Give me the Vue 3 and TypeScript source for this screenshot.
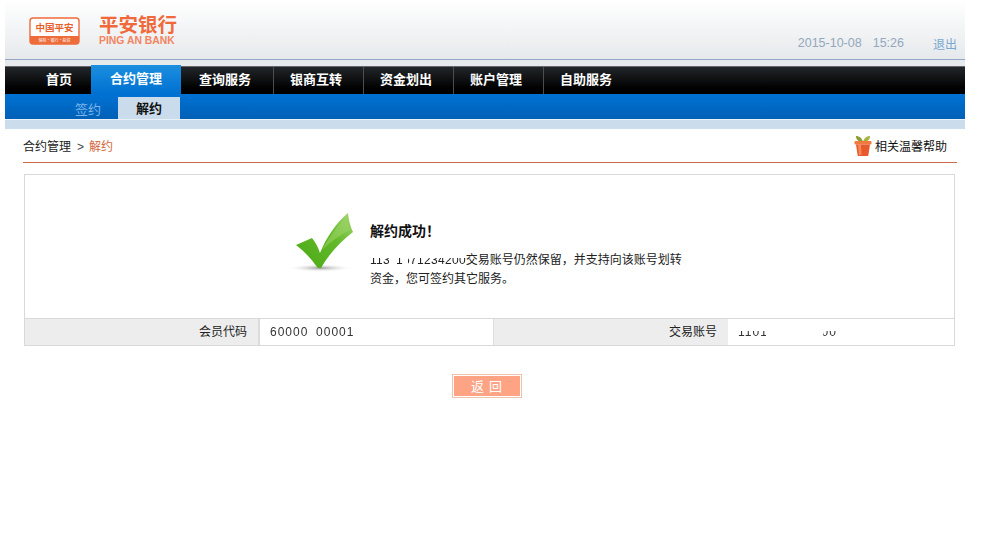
<script setup lang="ts">
interface NavItem { label: string; active?: boolean; first?: boolean }
const navItems: NavItem[] = [
  { label: '首页', first: true },
  { label: '合约管理', active: true },
  { label: '查询服务' },
  { label: '银商互转' },
  { label: '资金划出' },
  { label: '账户管理' },
  { label: '自助服务' },
]
</script>

<template>
  <div class="page">
    <header class="top">
      <div class="logo">
        <svg width="52" height="28" viewBox="0 0 52 28" class="logo-mark">
          <rect x="1" y="1" width="49" height="26" rx="3" fill="#fff" stroke="#ee6b3a" stroke-width="1.4" />
          <path d="M1 19h49v5a3 3 0 0 1-3 3H4a3 3 0 0 1-3-3z" fill="#ee6b3a" />
          <text x="25.5" y="14" text-anchor="middle" class="mark-t">中国平安</text>
          <text x="25.5" y="25" text-anchor="middle" class="mark-s">保险·银行·投资</text>
        </svg>
        <div class="brand">
          <div class="brand-cn">平安银行</div>
          <div class="brand-en">PING AN BANK</div>
        </div>
      </div>
      <div class="meta">
        <span class="date">2015-10-08</span>
        <span class="time">15:26</span>
        <span class="logout">退出</span>
      </div>
    </header>
    <div class="gap"></div>
    <nav class="nav">
      <div
        v-for="item in navItems"
        :key="item.label"
        class="nav-item"
        :class="{ active: item.active, first: item.first }"
      >{{ item.label }}</div>
    </nav>
    <div class="sub">
      <span class="sub-link">签约</span>
      <span class="sub-tab">解约</span>
    </div>
    <div class="band"></div>

    <main class="content">
      <div class="crumb">
        <div class="crumb-left">合约管理<span class="arrow">&gt;</span><span class="crumb-cur">解约</span></div>
        <div class="help">
          <svg width="18" height="21" viewBox="0 0 18 21">
            <path d="M9 7C8 3 5 1 2 1c0 4 3 6 7 6z" fill="#8a9c2e" />
            <path d="M9 7c1-4 4-6 7-6 0 4-3 6-7 6z" fill="#a3b53a" />
            <rect x="0.5" y="6" width="17" height="3.5" rx="1" fill="#f2793f" />
            <path d="M2 9.5h14l-1.6 10.5a1 1 0 0 1-1 1H4.6a1 1 0 0 1-1-1z" fill="#e8592b" />
            <path d="M4 10h3l.5 10H5z" fill="#f58a58" />
          </svg>
          <span>相关温馨帮助</span>
        </div>
      </div>

      <section class="card">
        <div class="msg">
          <svg class="check" width="66" height="62" viewBox="0 0 66 62">
            <defs>
              <linearGradient id="chk" x1="0" y1="1" x2="1" y2="0">
                <stop offset="0" stop-color="#4aa814" />
                <stop offset="0.6" stop-color="#63b92a" />
                <stop offset="1" stop-color="#a7d873" />
              </linearGradient>
              <radialGradient id="shd">
                <stop offset="0" stop-color="#9a9a9a" />
                <stop offset="1" stop-color="#fff" stop-opacity="0" />
              </radialGradient>
            </defs>
            <ellipse cx="30" cy="56" rx="33" ry="4" fill="url(#shd)" />
            <path d="M6 33L22 26Q27 32 30 41C36 26 46 11 58 1Q59 12 63 20C50 30 39 42 31 56Q29 57 27 55Q18 42 6 33z" fill="url(#chk)" />
            <path d="M32 38C40 24 48 13 57 4Q58 12 60 18C50 23 40 30 32 38z" fill="#9ed468" opacity=".55" />
          </svg>
          <div class="msg-text">
            <h1>解约成功！</h1>
            <p><span class="mask-a">11311571234200</span>交易账号仍然保留，并支持向该账号划转<br />资金，您可签约其它服务。</p>
          </div>
        </div>
        <div class="rows">
          <div class="label">会员代码</div>
          <div class="value v1"><span class="mask-b">60000100001</span></div>
          <div class="label">交易账号</div>
          <div class="value"><span class="mask-c">1101700000000</span></div>
        </div>
      </section>

      <div class="actions">
        <button class="back" type="button">返 回</button>
      </div>
    </main>
  </div>
</template>

<style>
html, body { background: #fff; overflow: hidden; }
</style>

<style scoped>
.page {
  width: 960px;
  margin-left: 5px;
  font-family: "Noto Sans CJK SC", "Liberation Sans", sans-serif;
  font-size: 12px;
  color: #222;
}
.top {
  box-sizing: border-box;
  border-bottom: 1px solid #94a6c2;
  height: 60px;
  background: linear-gradient(#fff, #e6e9ec);
  display: flex;
  justify-content: space-between;
}
.logo { display: flex; align-items: flex-start; padding: 17px 0 0 24px; }
.logo-mark { display: block; }
.mark-t { font: 700 9.5px "Noto Sans CJK SC", sans-serif; fill: #e8602c; }
.mark-s { font: 400 4px "Noto Sans CJK SC", sans-serif; fill: #fff; }
.brand { margin-left: 18px; margin-top: -3px; color: #f0693a; }
.brand-cn { font-size: 19.5px; font-weight: 700; line-height: 19px; white-space: nowrap; }
.brand-en { font: 700 10.4px/10px "Liberation Sans", sans-serif; color: #f3855f; white-space: nowrap; margin-top: 3px; }
.meta {
  display: flex;
  align-items: center;
  height: 18px;
  margin-top: 34px;
  padding-right: 8px;
  color: #93a8bd;
}
.date, .time { font: 12.5px "Liberation Sans", sans-serif; }
.time { margin-left: 11px; }
.logout { margin-left: 29px; color: #78a8d0; font-size: 12px; }
.gap { height: 6px; background: #e7eaed; }
.nav {
  height: 28px;
  box-sizing: border-box;
  border-top: 1px solid #666;
  background: linear-gradient(#22262a, #000 80%);
  display: flex;
}
.nav-item {
  width: 90px;
  box-sizing: border-box;
  padding-left: 16px;
  border-right: 1px solid #4d4d4d;
  color: #fff;
  font-size: 13px;
  font-weight: 700;
  line-height: 24px;
  white-space: nowrap;
}
.nav-item:last-child { border-right: 0; }
.nav-item.first { width: 86px; padding-left: 41px; border-right: 0; }
.nav-item.active {
  margin-top: -2px;
  height: 29px;
  line-height: 26px;
  padding-left: 19px;
  background: linear-gradient(#1c8fe0, #0070d0);
  border-right: 0;
  width: 90px;
}
.nav-item.active + .nav-item { width: 93px; padding-left: 18px; }
.sub {
  height: 26px;
  box-sizing: border-box;
  border-bottom: 1px solid #e8f0f8;
  background: linear-gradient(#0072d4, #0060b6);
  display: flex;
  align-items: flex-end;
  padding-left: 70px;
  font-size: 13px;
}
.sub-link { color: #7db6ea; line-height: 21px; }
.sub-tab {
  margin-left: 17px;
  width: 62px;
  height: 22px;
  line-height: 22px;
  text-align: center;
  background: #cadcec;
  color: #111;
  font-weight: 700;
}
.band { height: 9px; background: #cbdcec; }
.content { padding: 0 8px 0 18px; }
.crumb {
  height: 34px;
  box-sizing: border-box;
  border-bottom: 1px solid #c96a48;
  display: flex;
  justify-content: space-between;
  align-items: center;
  padding-right: 10px;
}
.arrow { margin: 0 5px 0 6px; color: #444; font-family: "Liberation Sans", sans-serif; }
.crumb-cur { color: #d2683a; }
.help { display: flex; align-items: center; gap: 3px; color: #111; margin-top: -1px; }
.card {
  margin: 11px 2px 0 1px;
  border: 1px solid #d9d9d9;
}
.msg {
  height: 143px;
  box-sizing: border-box;
  position: relative;
  padding: 45px 0 0 345px;
}
.check { position: absolute; left: 265px; top: 37px; }
.msg-text h1 { margin: 0; font-size: 14px; line-height: 20px; font-weight: 700; color: #111; }
.msg-text p { margin: 10px 0 0; font-size: 12px; line-height: 18px; color: #222; width: 330px; white-space: nowrap; }
.mask-a, .mask-b, .mask-c { font-family: "Liberation Sans", sans-serif; }
.mask-a {
  letter-spacing: 0.3px;
  -webkit-mask-image: linear-gradient(90deg, #000 0 20%, transparent 20% 28%, #000 28% 34%, transparent 34% 40%, #000 40% 100%), linear-gradient(#0000 0 35%, #000 35% 100%);
  -webkit-mask-composite: source-in;
  mask-composite: intersect;
}
.mask-b {
  letter-spacing: 1px;
  -webkit-mask-image: linear-gradient(90deg, #000 0 46%, transparent 46% 55%, #000 55% 100%);
}
.mask-c {
  letter-spacing: 1px;
  -webkit-mask-image: linear-gradient(90deg, #000 0 28%, transparent 28% 86%, #000 86% 100%), linear-gradient(#0000 0 40%, #000 40% 100%);
  -webkit-mask-composite: source-in;
  mask-composite: intersect;
}
.rows {
  height: 27px;
  box-sizing: border-box;
  border-top: 1px solid #d9d9d9;
  display: grid;
  grid-template-columns: 235px 234px 234px 1fr;
  grid-template-rows: 26px;
  line-height: 24px;
}
.label { background: #ededed; text-align: right; padding-right: 11px; color: #222; }
.label:first-child { border-right: 2px solid #dcdcdc; }
.value { padding-left: 10px; color: #333; }
.v1 { border-right: 1px solid #dcdcdc; }
.actions { display: flex; justify-content: center; padding: 28px 6px 0 0; }
.back {
  width: 70px;
  height: 24px;
  box-sizing: border-box;
  border: 1px solid #f1c2ab;
  outline: 1px solid #fff;
  outline-offset: -2px;
  background: #ffa385;
  color: #fff;
  font-family: "Noto Sans CJK SC", sans-serif;
  font-size: 13px;
  letter-spacing: 1px;
  padding: 0;
  line-height: 22px;
}
</style>
